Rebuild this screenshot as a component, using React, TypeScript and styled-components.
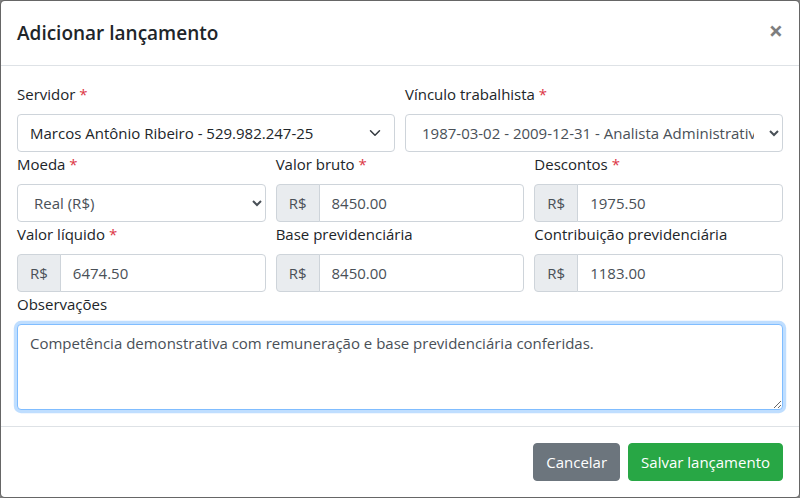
import React from "react";
import styled, { createGlobalStyle, css } from "styled-components";

const GlobalStyle = createGlobalStyle`
  *, *::before, *::after { box-sizing: border-box; }
  html, body { margin: 0; height: 100%; }
  body {
    background: #808080;
    font-family: "Open Sans", "Noto Sans", "Liberation Sans", sans-serif;
    font-size: 15px;
    line-height: 24px;
    color: #212529;
    overflow: hidden;
  }
`;

const Modal = styled.div`
  display: flex;
  flex-direction: column;
  width: 800px;
  height: 498px;
  background: #fff;
  background-clip: padding-box;
  border: 1px solid rgba(0, 0, 0, 0.2);
  border-radius: 4.8px;
`;

const Header = styled.div`
  display: flex;
  align-items: flex-start;
  justify-content: space-between;
  padding: 16px;
  border-bottom: 1px solid #dee2e6;
`;

const Title = styled.h5`
  margin: 0;
  font-size: 19px;
  font-weight: 600;
  line-height: 32px;
`;

const Close = styled.button`
  margin: -16px -16px -16px auto;
  padding: 17px 16px 16px;
  background: transparent;
  border: 0;
  font-family: inherit;
  font-size: 25px;
  font-weight: 700;
  line-height: 1;
  color: #000;
  opacity: 0.5;
`;

const Body = styled.div`
  flex: 1;
  padding: 16px;
`;

const Row = styled.div<{ $cols: number }>`
  display: grid;
  grid-template-columns: repeat(${(p) => p.$cols}, 1fr);
  column-gap: 10px;
`;

const Field = styled.div`
  display: flex;
  flex-direction: column;
  min-width: 0;
`;

const Label = styled.label`
  display: block;
  margin-bottom: 8px;
`;

const Req = styled.span`
  color: #dc3545;
`;

const controlBase = css`
  display: block;
  width: 100%;
  height: 38px;
  padding: 6px 12px;
  font-family: inherit;
  font-size: 15px;
  font-weight: 400;
  line-height: 24px;
  color: #495057;
  background: #fff;
  border: 1px solid #ced4da;
  border-radius: 4px;
  outline: none;
`;

const NativeSelect = styled.select`
  ${controlBase};
`;

const CustomSelectWrap = styled.div`
  position: relative;
`;

const CustomSelect = styled.select`
  ${controlBase};
  appearance: none;
  padding-right: 36px;
  color: #212529;
`;

const Chevron = styled.svg`
  position: absolute;
  right: 12px;
  top: 13px;
  width: 16px;
  height: 12px;
  pointer-events: none;
`;

const InputGroup = styled.div`
  display: flex;
  align-items: stretch;
  width: 100%;
`;

const Addon = styled.span`
  display: flex;
  align-items: center;
  padding: 6px 12px;
  font-size: 15px;
  line-height: 24px;
  color: #495057;
  background: #e9ecef;
  border: 1px solid #ced4da;
  border-radius: 4px 0 0 4px;
`;

const Input = styled.input`
  ${controlBase};
  flex: 1;
  min-width: 0;
  margin-left: -1px;
  border-radius: 0 4px 4px 0;
`;

const TextArea = styled.textarea<{ $focused?: boolean }>`
  ${controlBase};
  height: 86px;
  resize: vertical;
  ${(p) =>
    p.$focused &&
    css`
      border-color: #80bdff;
      box-shadow: 0 0 0 3.2px rgba(0, 123, 255, 0.25);
    `}
`;

const Footer = styled.div`
  display: flex;
  align-items: center;
  justify-content: flex-end;
  padding: 12px;
  border-top: 1px solid #dee2e6;
`;

const Button = styled.button<{ $variant: "secondary" | "success" }>`
  margin: 4px;
  padding: 6px 12px;
  font-family: inherit;
  font-size: 15px;
  line-height: 24px;
  color: #fff;
  border: 1px solid transparent;
  border-radius: 4px;
  background: ${(p) => (p.$variant === "success" ? "#28a745" : "#6c757d")};
  border-color: ${(p) => (p.$variant === "success" ? "#28a745" : "#6c757d")};
`;

function MoneyField({ label, value, required }: { label: string; value: string; required?: boolean }) {
  return (
    <Field>
      <Label>
        {label} {required && <Req>*</Req>}
      </Label>
      <InputGroup>
        <Addon>R$</Addon>
        <Input defaultValue={value} />
      </InputGroup>
    </Field>
  );
}

export default function App() {
  return (
    <>
      <GlobalStyle />
      <Modal>
        <Header>
          <Title>Adicionar lançamento</Title>
          <Close aria-label="Fechar">×</Close>
        </Header>
        <Body>
          <Row $cols={2}>
            <Field>
              <Label>
                Servidor <Req>*</Req>
              </Label>
              <CustomSelectWrap>
                <CustomSelect defaultValue="1">
                  <option value="1">Marcos Antônio Ribeiro - 529.982.247-25</option>
                </CustomSelect>
                <Chevron viewBox="0 0 16 16">
                  <path
                    fill="none"
                    stroke="#343a40"
                    strokeLinecap="round"
                    strokeLinejoin="round"
                    strokeWidth="2"
                    d="M2 5l6 6 6-6"
                  />
                </Chevron>
              </CustomSelectWrap>
            </Field>
            <Field>
              <Label>
                Vínculo trabalhista <Req>*</Req>
              </Label>
              <NativeSelect defaultValue="1">
                <option value="1">1987-03-02 - 2009-12-31 - Analista Administrativo</option>
              </NativeSelect>
            </Field>
          </Row>
          <Row $cols={3}>
            <Field>
              <Label>
                Moeda <Req>*</Req>
              </Label>
              <NativeSelect defaultValue="brl">
                <option value="brl">Real (R$)</option>
              </NativeSelect>
            </Field>
            <MoneyField label="Valor bruto" value="8450.00" required />
            <MoneyField label="Descontos" value="1975.50" required />
          </Row>
          <Row $cols={3}>
            <MoneyField label="Valor líquido" value="6474.50" required />
            <MoneyField label="Base previdenciária" value="8450.00" />
            <MoneyField label="Contribuição previdenciária" value="1183.00" />
          </Row>
          <Field>
            <Label>Observações</Label>
            <TextArea
              $focused
              rows={3}
              defaultValue="Competência demonstrativa com remuneração e base previdenciária conferidas."
            />
          </Field>
        </Body>
        <Footer>
          <Button $variant="secondary">Cancelar</Button>
          <Button $variant="success">Salvar lançamento</Button>
        </Footer>
      </Modal>
    </>
  );
}
